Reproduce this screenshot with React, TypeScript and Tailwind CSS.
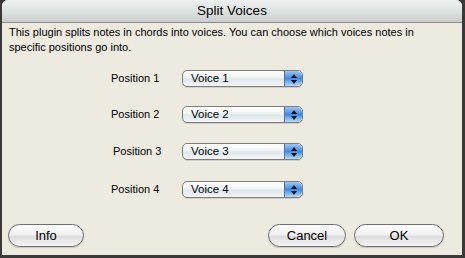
import React from "react";

const rows = [
  { label: "Position 1", value: "Voice 1", mt: "mt-[15px]", lw: "w-[71px] pl-0" },
  { label: "Position 2", value: "Voice 2", mt: "mt-[19px]", lw: "w-[71px] pl-0" },
  { label: "Position 3", value: "Voice 3", mt: "mt-[20px]", lw: "w-[71px] pl-[2px]" },
  { label: "Position 4", value: "Voice 4", mt: "mt-[21px]", lw: "w-[71px] pl-0" },
];

function Stepper() {
  return (
    <div className="flex h-full w-[18px] flex-col items-center justify-center gap-[2px] rounded-r-[5px] border-l border-[#3f74c4] bg-gradient-to-b from-[#9cc6f1] via-[#3f8ae0] to-[#b7dcfa]">
      <svg width="6" height="4" viewBox="0 0 6 4">
        <path d="M3 0 L6 4 L0 4 Z" fill="#111" />
      </svg>
      <svg width="6" height="4" viewBox="0 0 6 4">
        <path d="M0 0 L6 0 L3 4 Z" fill="#111" />
      </svg>
    </div>
  );
}

function Select({ value }: { value: string }) {
  return (
    <div className="flex h-[17px] w-[121px] items-stretch overflow-hidden rounded-[5px] border border-[#7d7d7d] bg-[linear-gradient(to_bottom,#ffffff_0%,#f4f4f4_40%,#dde8ec_55%,#f5f5f5_100%)] shadow-[0_1px_0_#cfcfcf]">
      <div className="flex flex-1 items-center pl-[8px] text-[11.5px] leading-none text-black">
        {value}
      </div>
      <Stepper />
    </div>
  );
}

function PillButton({ label, width }: { label: string; width: string }) {
  return (
    <button
      className={`flex h-[23px] ${width} items-center justify-center rounded-full border border-[#6e6e6e] bg-[linear-gradient(to_bottom,#fbfbfb_0%,#f1f1f1_45%,#dedede_55%,#f4f4f4_100%)] text-[13px] text-black shadow-[0_1px_1px_rgba(0,0,0,0.15)]`}
    >
      {label}
    </button>
  );
}

export default function App() {
  return (
    <div
      className="flex h-[258px] w-[465px] bg-[#3c3a38] pb-[3px] pl-[2px] pr-[3px]"
      style={{ fontFamily: '"Liberation Sans", Arial, sans-serif' }}
    >
      <div className="flex flex-1 flex-col overflow-hidden rounded-t-[6px] bg-[#edeae0]">
        <div className="flex h-[23px] items-center justify-center border-b border-[#8a8a8a] bg-[linear-gradient(to_bottom,#eef1f0_0%,#dde3e2_50%,#cacdcc_100%)] text-[13.5px] text-black">
          Split Voices
        </div>

        <p className="pl-[7px] pr-[20px] pt-[2px] text-[11px] leading-[15px] text-black">
          This plugin splits notes in chords into voices. You can choose which voices notes in specific positions go into.
        </p>

        {rows.map((r) => (
          <div key={r.label} className={`flex items-center pl-[109px] ${r.mt}`}>
            <span className={`${r.lw} text-[11px] text-black`}>{r.label}</span>
            <Select value={r.value} />
          </div>
        ))}

        <div className="mt-auto flex items-center pb-[8px] pl-[6px] pr-[18px]">
          <PillButton label="Info" width="w-[76px]" />
          <div className="ml-auto flex gap-[8px]">
            <PillButton label="Cancel" width="w-[78px]" />
            <PillButton label="OK" width="w-[90px]" />
          </div>
        </div>
      </div>
    </div>
  );
}
